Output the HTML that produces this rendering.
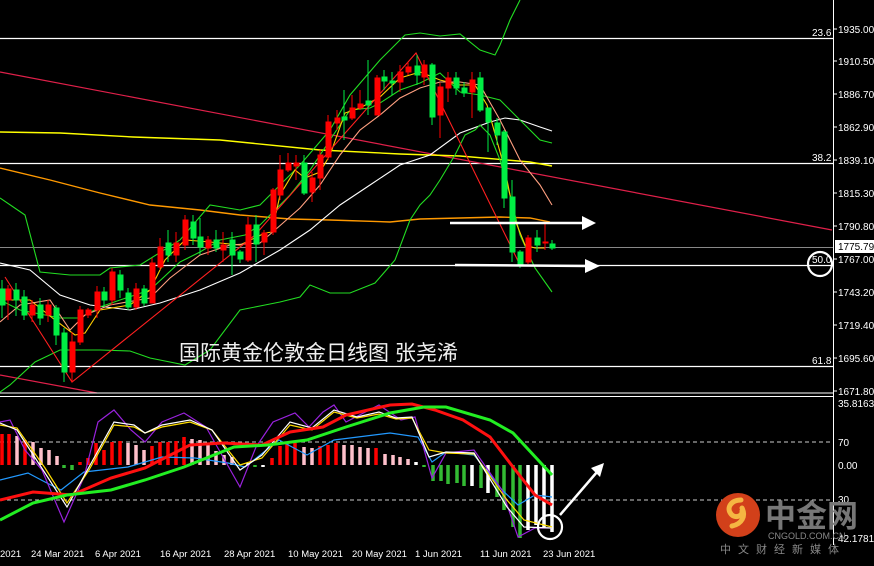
<!DOCTYPE html>
<html><head><meta charset="utf-8">
<style>
html,body{margin:0;padding:0;background:#000;width:874px;height:566px;overflow:hidden}
svg{display:block}
text{font-family:"Liberation Sans","DejaVu Sans",sans-serif}
</style></head><body>
<svg width="874" height="566" viewBox="0 0 874 566" xmlns="http://www.w3.org/2000/svg">
<rect width="874" height="566" fill="#000"/>
<!-- main chart levels -->
<g stroke="#fff" stroke-width="1.3">
<line x1="0" y1="38.5" x2="833" y2="38.5"/>
<line x1="0" y1="163.5" x2="833" y2="163.5"/>
<line x1="0" y1="265.5" x2="833" y2="265.5"/>
<line x1="0" y1="366.5" x2="833" y2="366.5"/>
</g>
<line x1="0" y1="247.5" x2="833" y2="247.5" stroke="#888" stroke-width="1"/>
<!-- trend lines -->
<line x1="0" y1="72" x2="832" y2="230" stroke="#e0204a" stroke-width="1.2"/>
<line x1="0" y1="375" x2="97" y2="393" stroke="#e0204a" stroke-width="1.2"/>
<g fill="none" stroke-width="1.1">
<polyline stroke="#ffff00" stroke-width="1.4" points="0,132 60,133 133,137 220,140 320,150 400,154 460,156 530,162 552,166"/>
<polyline stroke="#ff9900" stroke-width="1.4" points="0,168 50,180 100,193 150,205 200,210 240,215 290,219 330,220 390,222 420,219 460,218 500,217 530,218 550,222"/>
<polyline stroke="#fff" points="0,263 30,270 60,295 90,305 130,310 160,303 200,290 240,273 280,250 310,230 340,205 370,185 400,165 430,155 460,133 490,122 505,118 520,120 540,127 552,131"/>
<polyline stroke="#22dd22" points="0,198 25,215 40,272 70,275 100,275 110,268 140,265 180,240 210,205 240,210 260,205 280,185 300,165 330,130 350,95 380,60 405,35 420,33 440,36 460,34 480,50 495,55 500,45 510,20 520,0"/>
<polyline stroke="#22dd22" points="0,392 10,385 35,362 60,350 100,350 130,351 150,358 185,365 210,350 240,310 265,305 280,302 300,297 310,285 330,293 350,293 375,283 395,260 410,220 420,205 430,195 440,180 455,155 465,135 475,130 480,125 490,135 500,160 510,195 520,235 535,268 552,292"/>
<polyline stroke="#22dd22" points="0,300 20,310 60,318 80,318 100,307 120,300 150,290 180,262 200,252 220,240 245,235 260,225 290,195 310,170 330,140 350,110 370,108 380,103 400,90 420,83 440,73 460,92 480,95 500,100 520,120 540,140 552,143"/>
<polyline stroke="#ffcc00" points="0,300 30,300 55,320 75,335 85,333 100,310 130,305 150,290 165,260 185,240 210,242 240,245 265,233 272,232 280,195 295,170 305,178 320,172 330,155 345,113 360,108 380,97 400,78 410,75 420,72 440,80 460,85 475,85 487,105 505,170 515,220 525,245 535,248 545,248"/>
<polyline stroke="#ffa080" points="0,322 20,305 50,300 70,330 85,315 110,305 150,298 170,278 200,255 230,245 260,243 275,230 300,208 320,185 340,155 360,130 380,115 400,98 420,88 440,82 460,82 480,85 500,120 520,160 540,185 552,205"/>
<polyline stroke="#ff2020" points="5,277 72,382 255,235 416,53 520,265"/>
</g>
<!-- candles -->
<g id="c" stroke-width="1">
<g fill="#00ee44" stroke="#00ee44">
<line x1="2" y1="280" x2="2" y2="318"/><rect x="0" y="289" width="5" height="16"/>
<line x1="16" y1="283" x2="16" y2="316"/><rect x="14" y="290" width="5" height="10"/>
<line x1="24" y1="290" x2="24" y2="320"/><rect x="22" y="297" width="5" height="18"/>
<line x1="40" y1="298" x2="40" y2="325"/><rect x="38" y="305" width="5" height="13"/>
<line x1="56" y1="305" x2="56" y2="345"/><rect x="54" y="308" width="5" height="27"/>
<line x1="64" y1="328" x2="64" y2="382"/><rect x="62" y="333" width="5" height="39"/>
<line x1="104" y1="287" x2="104" y2="307"/><rect x="102" y="292" width="5" height="8"/>
<line x1="120" y1="270" x2="120" y2="298"/><rect x="118" y="275" width="5" height="15"/>
<line x1="128" y1="288" x2="128" y2="310"/><rect x="126" y="293" width="5" height="14"/>
<line x1="144" y1="285" x2="144" y2="306"/><rect x="142" y="289" width="5" height="14"/>
<line x1="168" y1="230" x2="168" y2="262"/><rect x="166" y="243" width="5" height="12"/>
<line x1="193" y1="215" x2="193" y2="245"/><rect x="191" y="222" width="5" height="16"/>
<line x1="200" y1="218" x2="200" y2="255"/><rect x="198" y="237" width="5" height="10"/>
<line x1="216" y1="230" x2="216" y2="252"/><rect x="214" y="240" width="5" height="8"/>
<line x1="232" y1="232" x2="232" y2="275"/><rect x="230" y="240" width="5" height="15"/>
<line x1="240" y1="250" x2="240" y2="263"/><rect x="238" y="252" width="5" height="7"/>
<line x1="256" y1="215" x2="256" y2="262"/><rect x="254" y="225" width="5" height="19"/>
<line x1="304" y1="155" x2="304" y2="195"/><rect x="302" y="163" width="5" height="30"/>
<line x1="344" y1="90" x2="344" y2="140"/><rect x="342" y="117" width="5" height="3"/>
<line x1="368" y1="60" x2="368" y2="115"/><rect x="366" y="101" width="5" height="4"/>
<line x1="384" y1="70" x2="384" y2="90"/><rect x="382" y="77" width="5" height="4"/>
<line x1="392" y1="72" x2="392" y2="95"/><rect x="390" y="81" width="5" height="2"/>
<line x1="417" y1="55" x2="417" y2="85"/><rect x="415" y="66" width="5" height="9"/>
<line x1="432" y1="63" x2="432" y2="125"/><rect x="430" y="65" width="5" height="52"/>
<line x1="456" y1="72" x2="456" y2="95"/><rect x="454" y="78" width="5" height="10"/>
<line x1="464" y1="82" x2="464" y2="97"/><rect x="462" y="88" width="5" height="5"/>
<line x1="480" y1="72" x2="480" y2="112"/><rect x="478" y="78" width="5" height="32"/>
<line x1="488" y1="108" x2="488" y2="152"/><rect x="486" y="108" width="5" height="14"/>
<line x1="497" y1="118" x2="497" y2="145"/><rect x="495" y="123" width="5" height="12"/>
<line x1="504" y1="130" x2="504" y2="208"/><rect x="502" y="132" width="5" height="66"/>
<line x1="512" y1="180" x2="512" y2="262"/><rect x="510" y="197" width="5" height="55"/>
<line x1="520" y1="250" x2="520" y2="268"/><rect x="518" y="252" width="5" height="13"/>
<line x1="537" y1="230" x2="537" y2="252"/><rect x="535" y="238" width="5" height="7"/>
<line x1="552" y1="240" x2="552" y2="250"/><rect x="550" y="244" width="5" height="4"/>
</g>
<g fill="#ff0000" stroke="#ff0000">
<line x1="8" y1="285" x2="8" y2="320"/><rect x="6" y="289" width="5" height="11"/>
<line x1="32" y1="300" x2="32" y2="322"/><rect x="30" y="305" width="5" height="10"/>
<line x1="48" y1="300" x2="48" y2="322"/><rect x="46" y="305" width="5" height="10"/>
<line x1="72" y1="332" x2="72" y2="382"/><rect x="70" y="342" width="5" height="30"/>
<line x1="80" y1="306" x2="80" y2="345"/><rect x="78" y="310" width="5" height="32"/>
<line x1="88" y1="308" x2="88" y2="318"/><rect x="86" y="310" width="5" height="5"/>
<line x1="97" y1="286" x2="97" y2="318"/><rect x="95" y="292" width="5" height="18"/>
<line x1="112" y1="268" x2="112" y2="305"/><rect x="110" y="272" width="5" height="28"/>
<line x1="136" y1="283" x2="136" y2="310"/><rect x="134" y="289" width="5" height="18"/>
<line x1="152" y1="258" x2="152" y2="303"/><rect x="150" y="263" width="5" height="40"/>
<line x1="160" y1="238" x2="160" y2="270"/><rect x="158" y="247" width="5" height="20"/>
<line x1="176" y1="232" x2="176" y2="262"/><rect x="174" y="243" width="5" height="12"/>
<line x1="185" y1="215" x2="185" y2="250"/><rect x="183" y="220" width="5" height="25"/>
<line x1="208" y1="236" x2="208" y2="255"/><rect x="206" y="240" width="5" height="8"/>
<line x1="223" y1="232" x2="223" y2="262"/><rect x="221" y="245" width="5" height="5"/>
<line x1="248" y1="217" x2="248" y2="262"/><rect x="246" y="225" width="5" height="35"/>
<line x1="264" y1="230" x2="264" y2="255"/><rect x="262" y="233" width="5" height="9"/>
<line x1="273" y1="188" x2="273" y2="235"/><rect x="271" y="190" width="5" height="42"/>
<line x1="280" y1="155" x2="280" y2="200"/><rect x="278" y="170" width="5" height="25"/>
<line x1="288" y1="153" x2="288" y2="172"/><rect x="286" y="163" width="5" height="7"/>
<line x1="296" y1="155" x2="296" y2="180"/><rect x="294" y="163" width="5" height="3"/>
<line x1="312" y1="172" x2="312" y2="202"/><rect x="310" y="178" width="5" height="14"/>
<line x1="320" y1="150" x2="320" y2="190"/><rect x="318" y="155" width="5" height="23"/>
<line x1="328" y1="115" x2="328" y2="160"/><rect x="326" y="122" width="5" height="35"/>
<line x1="337" y1="110" x2="337" y2="130"/><rect x="335" y="118" width="5" height="5"/>
<line x1="352" y1="95" x2="352" y2="120"/><rect x="350" y="108" width="5" height="10"/>
<line x1="360" y1="90" x2="360" y2="110"/><rect x="358" y="104" width="5" height="4"/>
<line x1="377" y1="75" x2="377" y2="115"/><rect x="375" y="78" width="5" height="37"/>
<line x1="400" y1="65" x2="400" y2="92"/><rect x="398" y="72" width="5" height="10"/>
<line x1="408" y1="62" x2="408" y2="75"/><rect x="406" y="67" width="5" height="5"/>
<line x1="424" y1="60" x2="424" y2="85"/><rect x="422" y="65" width="5" height="12"/>
<line x1="440" y1="83" x2="440" y2="138"/><rect x="438" y="87" width="5" height="28"/>
<line x1="448" y1="72" x2="448" y2="102"/><rect x="446" y="78" width="5" height="10"/>
<line x1="472" y1="72" x2="472" y2="118"/><rect x="470" y="80" width="5" height="12"/>
<line x1="528" y1="235" x2="528" y2="264"/><rect x="526" y="238" width="5" height="24"/>
<line x1="545" y1="222" x2="545" y2="250"/><rect x="543" y="242" width="5" height="1"/>
</g>
</g>
<!-- arrows main -->
<g stroke="#fff" stroke-width="2.5" fill="#fff">
<line x1="450" y1="223" x2="585" y2="223"/>
<polygon points="582,216 596,223 582,230" stroke="none"/>
<line x1="455" y1="265" x2="588" y2="266"/>
<polygon points="585,259 600,266 585,273" stroke="none"/>
</g>
<circle cx="820" cy="264" r="12" fill="none" stroke="#fff" stroke-width="2.2"/>
<text x="179" y="360" font-size="21" fill="#f0f0f0" style='font-family:"Liberation Sans","Noto Sans CJK SC",sans-serif'>国际黄金伦敦金日线图 张尧浠</text>
<!-- fib labels -->
<g fill="#fff" font-size="10">
<text x="812" y="36">23.6</text>
<text x="812" y="161">38.2</text>
<text x="812" y="263">50.0</text>
<text x="812" y="364">61.8</text>
</g>
<!-- separators -->
<line x1="0" y1="393" x2="833" y2="393" stroke="#fff" stroke-width="1"/>
<line x1="0" y1="396.5" x2="833" y2="396.5" stroke="#fff" stroke-width="1"/>
<!-- axis -->
<line x1="833.5" y1="0" x2="833.5" y2="545" stroke="#fff" stroke-width="1"/>
<g fill="#fff" font-size="10">
<text x="838" y="33">1935.00</text>
<text x="838" y="65">1910.50</text>
<text x="838" y="98">1886.70</text>
<text x="838" y="131">1862.90</text>
<text x="838" y="164">1839.10</text>
<text x="838" y="197">1815.30</text>
<text x="838" y="230">1790.80</text>
<text x="838" y="263">1767.00</text>
<text x="838" y="296">1743.20</text>
<text x="838" y="329">1719.40</text>
<text x="838" y="362">1695.60</text>
<text x="838" y="395">1671.80</text>
<text x="838" y="407">35.8163</text>
<text x="838" y="446">70</text>
<text x="838" y="469">0.00</text>
<text x="838" y="503">30</text>
<text x="838" y="542">42.1781</text>
</g>
<rect x="835" y="240" width="39" height="13" fill="#fff"/>
<text x="838" y="250" font-size="10" fill="#000">1775.79</text>
<g stroke="#fff" stroke-width="1"><line x1="833" y1="29" x2="837" y2="29"/><line x1="833" y1="61" x2="837" y2="61"/><line x1="833" y1="94" x2="837" y2="94"/><line x1="833" y1="127" x2="837" y2="127"/><line x1="833" y1="160" x2="837" y2="160"/><line x1="833" y1="193" x2="837" y2="193"/><line x1="833" y1="226" x2="837" y2="226"/><line x1="833" y1="259" x2="837" y2="259"/><line x1="833" y1="292" x2="837" y2="292"/><line x1="833" y1="325" x2="837" y2="325"/><line x1="833" y1="358" x2="837" y2="358"/><line x1="833" y1="391" x2="837" y2="391"/></g>
<!-- indicator -->
<g stroke="#ccc" stroke-width="1" stroke-dasharray="4,3">
<line x1="0" y1="442" x2="833" y2="442"/>
<line x1="0" y1="500" x2="833" y2="500"/>
</g>
<g stroke-width="3.5">
<g stroke="#ff0000">
<line x1="2" y1="465" x2="2" y2="434"/><line x1="9" y1="465" x2="9" y2="434"/><line x1="25" y1="465" x2="25" y2="440"/>
<line x1="80" y1="465" x2="80" y2="462"/><line x1="88" y1="465" x2="88" y2="458"/><line x1="96" y1="465" x2="96" y2="443"/><line x1="104" y1="465" x2="104" y2="450"/><line x1="112" y1="465" x2="112" y2="442"/><line x1="120" y1="465" x2="120" y2="441"/>
<line x1="152" y1="465" x2="152" y2="446"/><line x1="160" y1="465" x2="160" y2="442"/><line x1="168" y1="465" x2="168" y2="442"/><line x1="176" y1="465" x2="176" y2="441"/><line x1="184" y1="465" x2="184" y2="437"/>
<line x1="272" y1="465" x2="272" y2="458"/><line x1="280" y1="465" x2="280" y2="446"/><line x1="287" y1="465" x2="287" y2="443"/><line x1="295" y1="465" x2="295" y2="443"/><line x1="320" y1="465" x2="320" y2="446"/><line x1="328" y1="465" x2="328" y2="445"/><line x1="336" y1="465" x2="336" y2="443"/><line x1="376" y1="465" x2="376" y2="448"/>
</g>
<g stroke="#ffc0cb">
<line x1="17" y1="465" x2="17" y2="436"/><line x1="33" y1="465" x2="33" y2="442"/><line x1="41" y1="465" x2="41" y2="448"/><line x1="49" y1="465" x2="49" y2="450"/><line x1="57" y1="465" x2="57" y2="456"/>
<line x1="128" y1="465" x2="128" y2="443"/><line x1="136" y1="465" x2="136" y2="445"/><line x1="144" y1="465" x2="144" y2="450"/>
<line x1="192" y1="465" x2="192" y2="439"/><line x1="200" y1="465" x2="200" y2="440"/><line x1="208" y1="465" x2="208" y2="443"/><line x1="216" y1="465" x2="216" y2="451"/><line x1="224" y1="465" x2="224" y2="455"/><line x1="232" y1="465" x2="232" y2="457"/>
<line x1="304" y1="465" x2="304" y2="447"/><line x1="312" y1="465" x2="312" y2="448"/><line x1="344" y1="465" x2="344" y2="445"/><line x1="352" y1="465" x2="352" y2="445"/><line x1="360" y1="465" x2="360" y2="447"/><line x1="368" y1="465" x2="368" y2="448"/><line x1="385" y1="465" x2="385" y2="454"/><line x1="393" y1="465" x2="393" y2="455"/><line x1="400" y1="465" x2="400" y2="457"/><line x1="408" y1="465" x2="408" y2="459"/>
</g>
<g stroke="#33bb33">
<line x1="64" y1="465" x2="64" y2="468"/><line x1="72" y1="465" x2="72" y2="470"/><line x1="255" y1="465" x2="255" y2="467"/><line x1="424" y1="465" x2="424" y2="467"/>
<line x1="433" y1="465" x2="433" y2="481"/><line x1="441" y1="465" x2="441" y2="481"/><line x1="448" y1="465" x2="448" y2="484"/><line x1="457" y1="465" x2="457" y2="483"/><line x1="464" y1="465" x2="464" y2="486"/><line x1="481" y1="465" x2="481" y2="488"/><line x1="497" y1="465" x2="497" y2="497"/><line x1="504" y1="465" x2="504" y2="510"/><line x1="513" y1="465" x2="513" y2="527"/><line x1="520" y1="465" x2="520" y2="538"/>
</g>
<g stroke="#fff">
<line x1="248" y1="465" x2="248" y2="463"/><line x1="263" y1="465" x2="263" y2="467"/><line x1="416" y1="465" x2="416" y2="462"/>
<line x1="472" y1="465" x2="472" y2="486"/><line x1="488" y1="465" x2="488" y2="493"/><line x1="528" y1="465" x2="528" y2="530"/><line x1="536" y1="465" x2="536" y2="525"/><line x1="544" y1="465" x2="544" y2="528"/><line x1="552" y1="465" x2="552" y2="532"/>
</g>
</g>
<g fill="none">
<polyline stroke="#2299ff" stroke-width="1.2" points="0,480 28,473 45,482 61,490 84,472 128,467 162,457 195,458 228,463 245,467 279,440 307,455 334,440 390,433 418,437 432,462 446,452 474,455 502,490 518,505 535,495 552,497"/>
<polyline stroke="#9922dd" stroke-width="1.2" points="0,422 10,420 25,450 42,470 64,522 84,477 98,422 114,410 131,430 145,442 162,422 184,413 206,427 223,457 240,487 256,447 273,422 295,413 309,427 323,412 334,405 346,422 379,405 401,420 415,417 432,478 446,453 474,450 502,490 518,537 535,528 552,528"/>
<polyline stroke="#ffdd00" stroke-width="1.2" points="0,425 17,428 45,468 67,503 89,470 114,425 134,427 145,433 162,427 190,422 212,430 240,465 262,458 290,425 312,430 334,412 357,418 379,414 396,419 412,418 429,450 446,453 474,454 507,500 524,520 552,527"/>
<polyline stroke="#fff" stroke-width="1.2" points="0,423 17,430 45,473 67,507 89,467 114,422 134,425 145,433 162,425 190,420 212,430 240,470 262,455 290,422 312,428 334,410 357,417 379,412 396,418 412,417 429,457 446,452 474,453 507,507 524,527 552,528"/>
<polyline stroke="#ff1010" stroke-width="3" points="0,500 33,492 72,495 111,478 145,468 190,445 223,443 262,445 290,432 323,427 346,415 390,405 412,404 435,410 463,420 490,437 513,467 535,495 552,505"/>
<polyline stroke="#22ee22" stroke-width="3" points="0,520 33,503 67,495 111,490 145,480 184,467 234,447 268,445 307,440 346,427 390,413 424,407 446,407 490,420 513,433 552,475"/>
</g>
<circle cx="550" cy="527" r="12" fill="none" stroke="#fff" stroke-width="2.2"/>
<line x1="560" y1="515" x2="597" y2="472" stroke="#fff" stroke-width="2.5"/>
<polygon points="591,468 604,463 600,477" fill="#fff"/>
<!-- logo -->
<circle cx="738" cy="515" r="22" fill="#d2401a"/>
<path d="M741 500 c-10 0 -15 8 -10 14 c4 5 12 2 11 -3 M742 508 c4 8 0 16 -10 18" fill="none" stroke="#f5b642" stroke-width="5" stroke-linecap="round"/>
<text x="765" y="527" font-size="31" font-weight="bold" fill="#777" style='font-family:"Noto Sans CJK SC",sans-serif'>中金网</text>
<text x="768" y="539" font-size="9" fill="#888">CNGOLD.COM.CN</text>
<text x="720" y="553" font-size="11" fill="#888" letter-spacing="7" style='font-family:"Noto Sans CJK SC",sans-serif'>中文财经新媒体</text>
<!-- dates -->
<g fill="#fff" font-size="9.5">
<text x="0" y="557">2021</text>
<text x="31" y="557">24 Mar 2021</text>
<text x="95" y="557">6 Apr 2021</text>
<text x="160" y="557">16 Apr 2021</text>
<text x="224" y="557">28 Apr 2021</text>
<text x="288" y="557">10 May 2021</text>
<text x="352" y="557">20 May 2021</text>
<text x="415" y="557">1 Jun 2021</text>
<text x="480" y="557">11 Jun 2021</text>
<text x="543" y="557">23 Jun 2021</text>
</g>
</svg>
</body></html>
